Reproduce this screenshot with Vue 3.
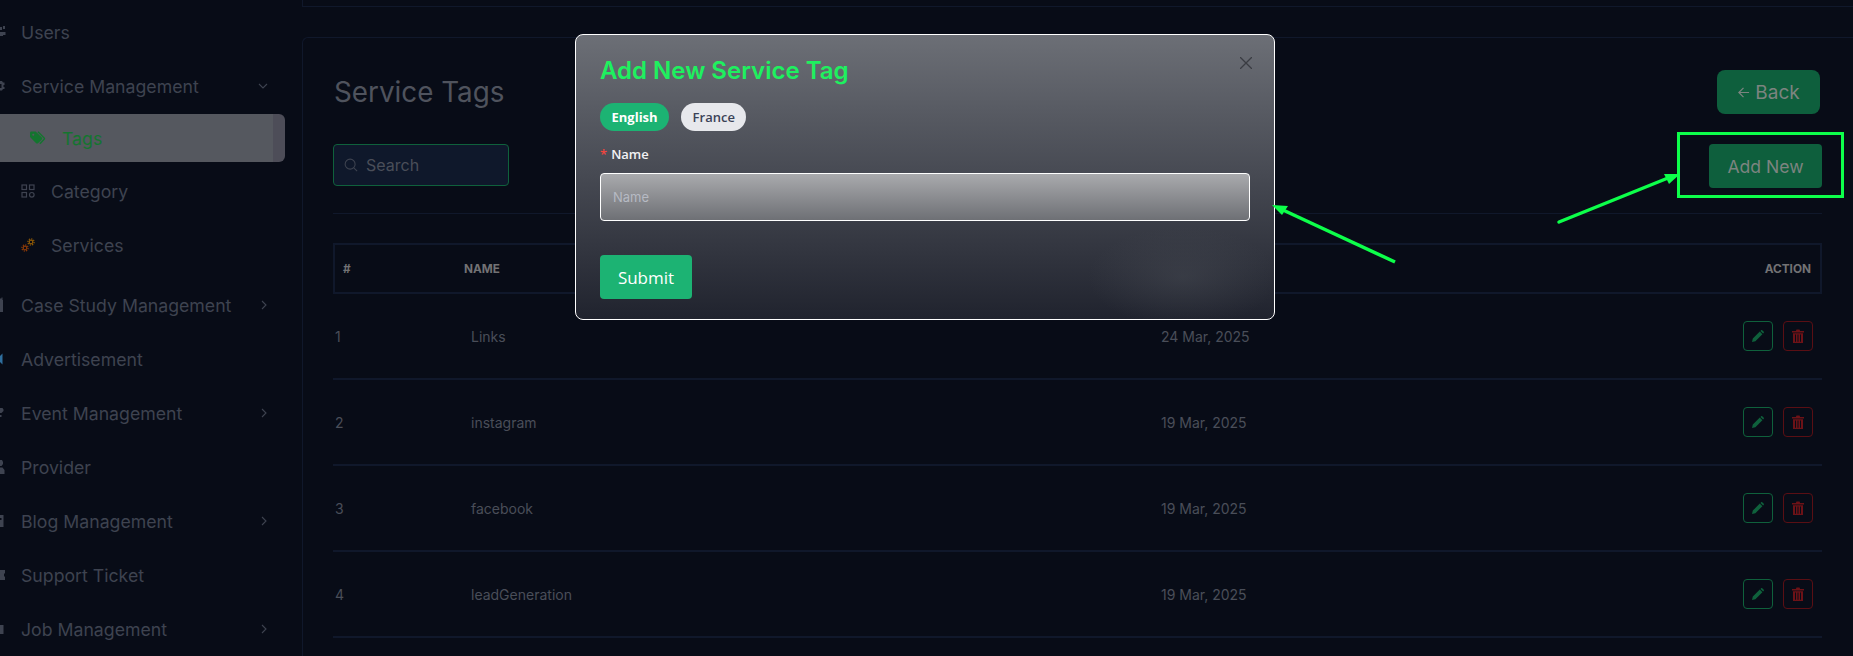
<template>
  <div class="page">
    <!-- sidebar, scrolled slightly off the left edge in the reference -->
    <aside class="sidebar">
      <div class="nav-item" v-for="item in navTop" :key="item.label">
        <svg class="nav-icon" viewBox="0 0 6 16"><path :fill="item.color" :d="item.icon" /></svg>
        <span class="nav-label">{{ item.label }}</span>
        <svg v-if="item.open" class="chev" viewBox="0 0 10 10"><path d="M1 3 L5 7 L9 3" /></svg>
      </div>

      <div class="sub-item active">
        <svg class="sub-icon" viewBox="0 0 18 14">
          <path fill="#14752f" d="M0 1.5C0 .7.7 0 1.5 0H6l6.5 6.5c.6.6.6 1.500 0 2L8.500 12.500c-.6.6-1.500.6-2 0L0 6z" />
          <path fill="none" stroke="#14752f" stroke-width="1.500" d="M8.500 .5 15 7 c.4.4.4 1 0 1.400L10.500 13" />
          <circle cx="3.500" cy="3.500" r="1.100" fill="#55585f" />
        </svg>
        <span class="sub-label">Tags</span>
      </div>
      <div class="sub-item">
        <svg class="sub-icon" viewBox="0 0 14 14" fill="none" stroke="#3e4350" stroke-width="1.200">
          <rect x="1" y="1" width="4.500" height="4.500" />
          <rect x="8.500" y="1" width="4.500" height="4.500" />
          <rect x="1" y="8.500" width="4.500" height="4.500" />
          <circle cx="10.800" cy="10.800" r="2.300" />
        </svg>
        <span class="sub-label">Category</span>
      </div>
      <div class="sub-item">
        <svg class="sub-icon" viewBox="0 0 14 14" fill="none">
          <circle cx="10" cy="4" r="1.800" stroke="#8f5a06" stroke-width="1.200" />
          <circle cx="10" cy="4" r="3.100" stroke="#8f5a06" stroke-width="1.200" stroke-dasharray="1.300 1.100" />
          <circle cx="4" cy="10" r="1.800" stroke="#8a3a08" stroke-width="1.200" />
          <circle cx="4" cy="10" r="3.100" stroke="#8a3a08" stroke-width="1.200" stroke-dasharray="1.300 1.100" />
        </svg>
        <span class="sub-label">Services</span>
      </div>

      <div class="nav-group">
        <div class="nav-item" v-for="item in navBottom" :key="item.label">
          <svg class="nav-icon" viewBox="0 0 6 16"><path :fill="item.color" :d="item.icon" /></svg>
          <span class="nav-label">{{ item.label }}</span>
          <svg v-if="item.more" class="chev right" viewBox="0 0 10 10"><path d="M3 1 L7 5 L3 9" /></svg>
        </div>
      </div>
    </aside>

    <main class="content">
      <div class="stub"></div>
      <section class="card">
        <div class="card-head">
          <h2 class="card-title">Service Tags</h2>
          <button class="btn btn-back">
            <svg class="back-arrow" viewBox="0 0 14 14"><path d="M13 7 H2 M7 2 L2 7 L7 12" /></svg>
            Back
          </button>
        </div>

        <div class="toolbar">
          <div class="search">
            <svg class="search-icon" viewBox="0 0 16 16"><circle cx="7" cy="7" r="5.700" /><path d="M11.200 11.200 L15 15" /></svg>
            <span>Search</span>
          </div>
          <button class="btn btn-add">Add New</button>
        </div>

        <div class="rule"></div>

        <div class="table-head">
          <span>#</span>
          <span>NAME</span>
          <span></span>
          <span class="ta-right">ACTION</span>
        </div>
        <div class="table-row" v-for="row in rows" :key="row.id">
          <span>{{ row.id }}</span>
          <span>{{ row.name }}</span>
          <span>{{ row.date }}</span>
          <span class="actions">
            <span class="act act-edit">
              <svg viewBox="0 0 12 12"><path d="M0 12 L.8 8.600 L7.800 1.600 L10.400 4.200 L3.400 11.200 Z M8.500 .9 L9.200 .2 C9.500 0 9.900 0 10.200 .2 L11.800 1.800 C12 2.100 12 2.500 11.800 2.800 L11.100 3.500 Z" /></svg>
            </span>
            <span class="act act-del">
              <svg viewBox="0 0 12 14"><path fill-rule="evenodd" d="M0 2 H3.800 L4.500 .6 H7.500 L8.200 2 H12 V3.400 H0 Z M1 4.200 H11 V14 H1 Z M3 5.500 V12.800 H4 V5.500 Z M5.500 5.500 V12.800 H6.500 V5.500 Z M8 5.500 V12.800 H9 V5.500 Z" /></svg>
            </span>
          </span>
        </div>
      </section>
    </main>

    <!-- modal -->
    <div class="modal">
      <svg class="close" viewBox="0 0 12 12"><path d="M0 0 L12 12 M12 0 L0 12" /></svg>
      <h3 class="modal-title">Add New Service Tag</h3>
      <div class="pills">
        <span class="pill pill-on">English</span>
        <span class="pill">France</span>
      </div>
      <label class="field-label"><span class="req">*</span>Name</label>
      <div class="field">Name</div>
      <button class="submit">Submit</button>
    </div>

    <!-- hand drawn annotation on top of the screenshot -->
    <svg class="notes" width="1853" height="656" viewBox="0 0 1853 656">
      <rect x="1678.500" y="133.500" width="164" height="63" fill="none" stroke="#0dff4a" stroke-width="3" />
      <path d="M1559 222 L1668 178" stroke="#0dff4a" stroke-width="3.500" stroke-linecap="round" fill="none" />
      <path d="M1680 174 L1664 174 L1669 184 Z" fill="#0dff4a" />
      <path d="M1395 262 L1283 210" stroke="#0dff4a" stroke-width="3.500" fill="none" />
      <path d="M1272 205 L1288 206 L1282 215 Z" fill="#0dff4a" />
    </svg>
  </div>
</template>

<script setup>
const grey = '#3e4350';

// only the right end of each nav icon is on screen, the rest is scrolled away
const navTop = [
  { label: 'Users', color: grey, icon: 'M0 3 H2 V6 H0 Z M3 2 H5 V5 H3 Z M0 8 H5.500 V11 H3 V12 H0 Z' },
  { label: 'Service Management', color: grey, open: true, icon: 'M0 3 H2 L3 4.500 H4.500 V7 H3.500 V9 H4.500 V11 H3 L2 12.500 H0 V10 H1.500 V6 H0 Z' }
];

const navBottom = [
  { label: 'Case Study Management', color: grey, more: true, icon: 'M0 1.500 H1.500 V.5 H2.500 V3 H3 V15 H0 Z' },
  { label: 'Advertisement', color: '#2f6f9e', icon: 'M0 5 L2.500 2.500 V13.500 L0 11 Z' },
  { label: 'Event Management', color: grey, more: true, icon: 'M0 3 H2.500 L3.500 4.500 V6 L1.500 8 H0 Z M0 10 H1.500 V12 H0 Z' },
  { label: 'Provider', color: grey, icon: 'M0 1 H2 L3 3 V5 L1.500 7 H0 Z M0 8.500 H2.500 L4.500 11 V15 H0 Z' },
  { label: 'Blog Management', color: grey, more: true, icon: 'M0 2 H3.500 V14 H0 Z M0 5 V7 H1.500 V5 Z' },
  { label: 'Support Ticket', color: grey, icon: 'M0 3 H5 V6.500 H4 V9.500 H5 V13 H0 Z' },
  { label: 'Job Management', color: grey, more: true, icon: 'M0 4 H3.500 V13 H0 Z' }
];

const rows = [
  { id: 1, name: 'Links', date: '24 Mar, 2025' },
  { id: 2, name: 'instagram', date: '19 Mar, 2025' },
  { id: 3, name: 'facebook', date: '19 Mar, 2025' },
  { id: 4, name: 'leadGeneration', date: '19 Mar, 2025' }
];
</script>

<style>
html, body {
  margin: 0;
  height: 100%;
  overflow: hidden;
  background: #080c17;
}
</style>

<style scoped>
.page {
  position: relative;
  display: flex;
  width: 1853px;
  height: 656px;
  overflow: hidden;
  background: #080c17;
  font-family: Inter, "Liberation Sans", sans-serif;
  color: #4a4e59;
}
.sidebar {
  width: 302px;
  flex: none;
  padding-top: 5px;
  box-sizing: border-box;
}
.nav-item {
  display: flex;
  align-items: center;
  height: 54px;
  position: relative;
  padding-left: 21px;
  font-size: 17.7px;
  color: #3e4350;
}
.nav-icon {
  position: absolute;
  left: 0;
  top: 19px;
  width: 6px;
  height: 16px;
}
.chev {
  position: absolute;
  left: 258px;
  top: 22px;
  width: 10px;
  height: 10px;
  fill: none;
  stroke: #3e4350;
  stroke-width: 1.100;
}
.chev.right {
  left: 259px;
}
.sub-item {
  display: flex;
  align-items: center;
  box-sizing: border-box;
  height: 54px;
  padding-left: 21px;
  padding-bottom: 2px;
  font-size: 17.7px;
  color: #3e4350;
}
.sub-item.active {
  height: 48px;
  width: 285px;
  margin: 1px 0 3px;
  padding-left: 20px;
  padding-bottom: 0;
  background: #55585f;
  border-right: 12px solid #4d4d58;
  border-radius: 0 6px 6px 0;
  color: #14752f;
}
.sub-icon {
  width: 14px;
  height: 14px;
  margin-right: 16px;
  flex: none;
}
.sub-item.active .sub-icon {
  width: 17px;
  height: 14px;
  margin: 0 15px 0 10px;
}
.nav-group {
  margin-top: 5px;
}
.content {
  flex: 1;
  min-width: 0;
}
.stub {
  height: 6px;
  border: 1px solid #10182b;
  border-top: none;
  border-right: none;
}
.card {
  margin-top: 30px;
  padding: 32px 31px 0 30px;
  border: 1px solid #10182b;
  border-right: none;
  border-radius: 6px 0 0 0;
  height: 640px;
  box-sizing: border-box;
}
.card-head,
.toolbar {
  display: flex;
  justify-content: space-between;
  align-items: flex-start;
}
.card-head {
  align-items: center;
}
.card-title {
  margin: 0 0 0 1px;
  font-size: 27.8px;
  font-weight: 400;
  color: #4f535d;
}
.btn {
  border: none;
  border-radius: 6px;
  background: #0e5f3d;
  color: #7c8480;
  font-family: inherit;
  font-size: 17.6px;
}
.btn-back {
  display: flex;
  align-items: center;
  gap: 5px;
  justify-content: center;
  width: 103px;
  height: 44px;
  margin-right: 2px;
  border-radius: 8px;
  font-size: 19px;
}
.back-arrow {
  width: 13px;
  height: 13px;
  fill: none;
  stroke: #7c8480;
  stroke-width: 1.300;
}
.toolbar {
  margin-top: 30px;
}
.search {
  display: flex;
  align-items: center;
  gap: 8px;
  box-sizing: border-box;
  width: 176px;
  height: 42px;
  padding-left: 10px;
  border: 1px solid #0f613c;
  border-radius: 4px;
  background: #0f182b;
  color: #4a4e59;
  font-size: 16px;
}
.search-icon {
  width: 14px;
  height: 14px;
  fill: none;
  stroke: #3e4350;
  stroke-width: 1.200;
}
.btn-add {
  width: 113px;
  height: 44px;
  border-radius: 4px;
}
.rule {
  height: 1px;
  margin-top: 25px;
  background: #10182b;
}
.table-head,
.table-row {
  display: grid;
  align-items: center;
}
.table-head {
  box-sizing: border-box;
  height: 51px;
  margin-top: 29px;
  padding: 0 9px 0 8px;
  border: 2px solid #10182b;
  font-size: 11.800px;
  font-weight: 700;
  color: #727274;
  grid-template-columns: 121px 707px 1fr 120px;
}
.ta-right {
  text-align: right;
}
.table-row {
  box-sizing: border-box;
  height: 86px;
  padding-left: 2px;
  border-bottom: 2px solid #10182b;
  font-size: 14px;
  color: #4a4e59;
  grid-template-columns: 136px 690px 1fr 120px;
}
.actions {
  display: flex;
  justify-content: flex-end;
  gap: 10px;
  padding-right: 9px;
}
.act {
  display: flex;
  align-items: center;
  justify-content: center;
  width: 30px;
  height: 30px;
  box-sizing: border-box;
  border-radius: 4px;
  border: 1px solid #0f613c;
}
.act svg {
  width: 12px;
  height: 12px;
  fill: #0f613c;
}
.act-del {
  border-color: #5a0f14;
}
.act-del svg {
  height: 14px;
  fill: #6d1217;
}

/* modal */
.modal {
  position: absolute;
  left: 575px;
  top: 34px;
  width: 700px;
  height: 286px;
  box-sizing: border-box;
  padding: 0 24px;
  border: 1px solid #fff;
  border-radius: 8px;
  background:
    radial-gradient(ellipse 95px 50px at 607px 242px, rgba(80, 84, 92, .35), transparent),
    linear-gradient(180deg, #6c6f76 0%, #20232e 100%);
}
.close {
  position: absolute;
  right: 22px;
  top: 22px;
  width: 12px;
  height: 12px;
  fill: none;
  stroke: #3a3c42;
  stroke-width: 1.300;
}
.modal-title {
  margin: 21px 0 0;
  font-size: 24px;
  line-height: 30px;
  font-weight: 600;
  color: #1ef05f;
}
.pills {
  display: flex;
  gap: 12px;
  margin-top: 17px;
}
.pill {
  display: flex;
  align-items: center;
  height: 28px;
  padding: 0 11.500px;
  border-radius: 14px;
  background: #e7e8ec;
  color: #3b4257;
  font-family: "Open Sans", "Noto Sans", sans-serif;
  font-size: 13px;
  font-weight: 600;
}
.pill-on {
  background: #1cb373;
  color: #fff;
  font-weight: 700;
}
.field-label {
  display: block;
  margin-top: 13px;
  font-family: "Open Sans", "Noto Sans", sans-serif;
  font-size: 13px;
  line-height: 20px;
  font-weight: 600;
  color: #f2f2f4;
}
.req {
  margin-right: 4px;
  color: #f0453f;
}
.field {
  display: flex;
  align-items: center;
  box-sizing: border-box;
  width: 650px;
  height: 48px;
  margin-top: 9px;
  padding-left: 12px;
  border: 1px solid #fff;
  border-radius: 4px;
  background: linear-gradient(180deg, #a9aaad 0%, #6e7075 100%);
  color: #b6bac3;
  font-size: 13px;
}
.submit {
  display: block;
  width: 92px;
  height: 44px;
  margin-top: 34px;
  border: none;
  border-radius: 4px;
  background: #1cb373;
  color: #fff;
  font-family: "Open Sans", "Noto Sans", sans-serif;
  font-size: 17px;
}
.notes {
  position: absolute;
  left: 0;
  top: 0;
  pointer-events: none;
}
</style>
